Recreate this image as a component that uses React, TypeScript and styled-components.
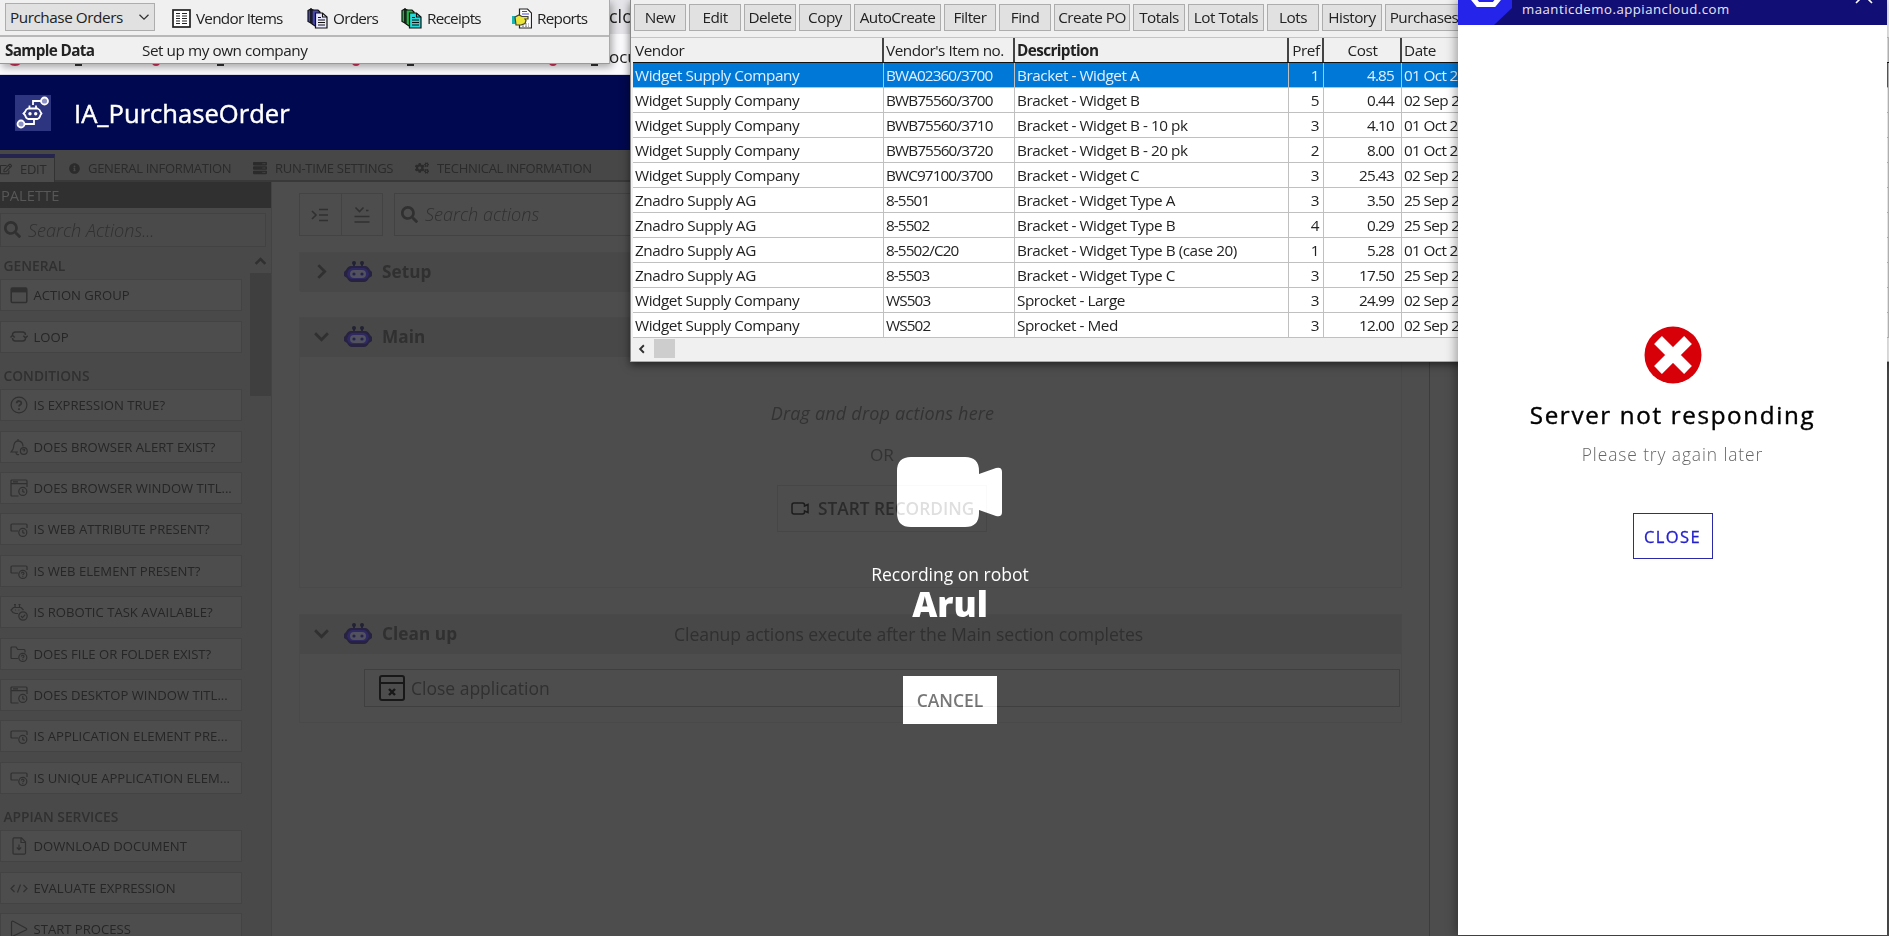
import React from "react";
import styled, { createGlobalStyle } from "styled-components";
import { FaSearch, FaInfoCircle, FaServer, FaCogs, FaRegEdit } from "react-icons/fa";

const Global = createGlobalStyle`
  * { box-sizing: border-box; }
  body { margin: 0; background: #4d4d4d; font-family: "Open Sans", "Noto Sans", sans-serif; }
  button { font-family: inherit; margin: 0; padding: 0; }
  svg { display: block; flex: none; }
`;

const Desktop = styled.div`
  position: relative;
  width: 1889px;
  height: 936px;
  overflow: hidden;
  background: #4d4d4d;
  display: flex;
  flex-direction: column;
`;

/* ---------- browser page ---------- */

const UrlBar = styled.div`
  height: 34px;
  flex: none;
  background: #e6e6ea;
  padding: 2px 0 0 609px;
  font-size: 18px;
  line-height: 28px;
  color: #222;
`;

const Bookmarks = styled.div`
  height: 41px;
  flex: none;
  display: flex;
  background: #fbfbfd;
  border-bottom: 1px solid #dcdce8;
  padding: 8px 0 0 7px;
  font-size: 17px;
  line-height: 30px;
  color: #222;
`;

const Bookmark = styled.div<{ $w: number; $gap: number }>`
  display: flex;
  width: ${(p) => p.$w}px;
  gap: ${(p) => p.$gap}px;
`;

const BookmarkDot = styled.span<{ $size: number }>`
  width: ${(p) => p.$size}px;
  height: ${(p) => p.$size}px;
  margin-top: ${(p) => 24 - p.$size}px;
  border-radius: 50%;
  background: #d8345f;
  flex: none;
`;

const BookmarkTail = styled.span`
  width: 7px;
  height: 2px;
  margin-top: 22px;
  background: #333;
`;

const AppHeader = styled.header`
  height: 75px;
  flex: none;
  background: #00084f;
  display: flex;
  align-items: center;
  padding: 1px 0 0 15px;
  gap: 23px;
  color: #fff;
  font-size: 25.6px;
  -webkit-text-stroke: 0.45px #fff;
`;

const TabStrip = styled.nav`
  height: 32px;
  flex: none;
  display: flex;
  background: #474747;
  border-bottom: 2px solid #393939;
  font-size: 13px;
  letter-spacing: -0.3px;
  color: #2b2b2b;
`;

const Tab = styled.div<{ $w: number; $active?: boolean }>`
  width: ${(p) => p.$w}px;
  height: ${(p) => (p.$active ? 28 : 30)}px;
  margin-top: ${(p) => (p.$active ? 4 : 0)}px;
  padding-top: ${(p) => (p.$active ? 0 : 6)}px;
  padding-bottom: ${(p) => (p.$active ? 2 : 0)}px;
  display: flex;
  align-items: center;
  gap: 8px;
  flex: none;
  white-space: nowrap;
  ${(p) =>
    p.$active &&
    `background:#4b4b4b;border-top:4px solid #24244f;border-right:1px solid #333;margin-right:14px;`}
`;

const Body = styled.div`
  flex: 1;
  display: flex;
  min-height: 0;
`;

const Sidebar = styled.aside`
  width: 272px;
  flex: none;
  display: flex;
  flex-direction: column;
  background: #494949;
  border-right: 1px solid #434343;
  overflow: hidden;
`;

const PaletteTitle = styled.div`
  height: 26px;
  flex: none;
  background: #303030;
  color: #575757;
  font-size: 14.7px;
  line-height: 27px;
  padding-left: 1px;
`;

const SearchBox = styled.div<{ $main?: boolean }>`
  display: flex;
  align-items: center;
  flex: none;
  height: ${(p) => (p.$main ? 43 : 34)}px;
  width: ${(p) => (p.$main ? 400 : 266)}px;
  margin-top: ${(p) => (p.$main ? 0 : 5)}px;
  border: 1px solid #424242;
  background: ${(p) => (p.$main ? "#4d4d4d" : "#4a4a4a")};
  padding: 0 0 1px ${(p) => (p.$main ? 6 : 3)}px;
  gap: 7px;
  font-size: 18.1px;
  font-style: italic;
  font-weight: 300;
  color: #303030;
`;

const PaletteBody = styled.div`
  display: flex;
  flex: 1;
  min-height: 0;
`;

const PaletteList = styled.div`
  width: 250px;
  display: flex;
  flex-direction: column;
  padding-top: 5px;
  overflow: hidden;
`;

const GroupTitle = styled.h3`
  margin: 0;
  height: 27.2px;
  flex: none;
  padding: 4px 0 0 3.5px;
  font-size: 13.8px;
  font-weight: 600;
  line-height: 20px;
  color: #303030;
`;

const PaletteItem = styled.div`
  width: 242px;
  height: 32px;
  margin-bottom: 9.4px;
  flex: none;
  border: 1px solid #434343;
  background: #4d4d4d;
  display: flex;
  align-items: center;
  gap: 5.5px;
  padding: 0 0 0 9px;
  font-size: 13.1px;
  color: #262626;
  white-space: nowrap;
`;

const ScrollTrack = styled.div`
  flex: 1;
  display: flex;
  flex-direction: column;
  align-items: center;
  padding-top: 8px;
  gap: 5px;
`;

const ScrollThumb = styled.div`
  width: 21px;
  height: 123px;
  background: #3f3f3f;
`;

const Workspace = styled.main`
  width: 1158px;
  flex: none;
  border-right: 1px solid #3c3c3c;
  padding: 11px 27px 0 27px;
  display: flex;
  flex-direction: column;
`;

const Tools = styled.div`
  display: flex;
  height: 43px;
  flex: none;
`;

const ToolButton = styled.button<{ $last?: boolean }>`
  width: 42.5px;
  height: 43px;
  border: 1px solid #434343;
  background: transparent;
  display: flex;
  align-items: center;
  justify-content: center;
  margin-right: ${(p) => (p.$last ? 11 : -1)}px;
`;

const Section = styled.section<{ $h: number; $mt: number }>`
  height: ${(p) => p.$h}px;
  margin-top: ${(p) => p.$mt}px;
  border: 1px solid #494949;
  flex: none;
  display: flex;
  flex-direction: column;
`;

const SectionBar = styled.div`
  height: 39px;
  flex: none;
  background: #484848;
  display: flex;
  align-items: center;
  padding-bottom: 2px;
  font-size: 17.6px;
  letter-spacing: -0.07px;
  color: #303030;
`;

const SectionName = styled.span`
  font-size: 17.2px;
  font-weight: 700;
  letter-spacing: 0.05px;
  width: 292px;
  margin-left: 9px;
`;

const ChevronCell = styled.span`
  width: 43px;
  padding-right: 1px;
  display: flex;
  justify-content: center;
`;

const DropZone = styled.div`
  flex: 1;
  padding: 44px 0 0 63px;
  display: flex;
  flex-direction: column;
  align-items: center;
  font-size: 17.2px;
  line-height: 24px;
  color: #333;
`;

const DropHint = styled.em`
  margin-bottom: 18px;
  padding-left: 1px;
  font-size: 18px;
  letter-spacing: 0.18px;
`;

const RecordButton = styled.div`
  width: 210px;
  height: 47px;
  margin-top: 18px;
  border: 1px solid #464646;
  display: flex;
  align-items: center;
  padding-left: 13px;
  gap: 9px;
  font-size: 17.3px;
  font-weight: 600;
  color: #2b2b2b;
  white-space: nowrap;
`;

const ActionRow = styled.div`
  height: 38px;
  margin: 15px 1px 0 64px;
  border: 1px solid #3f3f3f;
  display: flex;
  align-items: center;
  padding-left: 14px;
  gap: 6px;
  font-size: 17.5px;
  color: #303030;
`;

/* ---------- recording overlay ---------- */

const Overlay = styled.div`
  position: absolute;
  left: 850px;
  top: 457px;
  width: 200px;
  display: flex;
  flex-direction: column;
  align-items: center;
  color: #fff;
`;

const CameraMark = styled.svg`
  mix-blend-mode: plus-lighter;
  margin-right: 2px;
`;

const OverlayNote = styled.div`
  margin-top: 35px;
  font-size: 17.5px;
  line-height: 24px;
  white-space: nowrap;
`;

const RobotName = styled.div`
  font-size: 34.6px;
  font-weight: 800;
  line-height: 36px;
`;

const CancelButton = styled.button`
  width: 94px;
  height: 48px;
  margin-top: 54px;
  border: 0;
  background: #b4b4b4;
  color: #2a2a2a;
  font-size: 17.5px;
  font-weight: 600;
  mix-blend-mode: plus-lighter;
`;

/* ---------- desktop windows ---------- */

const MenuWindow = styled.div`
  position: absolute;
  left: 0;
  top: 0;
  width: 610px;
  height: 64px;
  background: #f0f0f0;
  border-right: 1px solid #aaa;
  border-bottom: 1px solid #999;
  box-shadow: 2px 3px 8px rgba(0, 0, 0, 0.35);
  font-size: 15.3px;
  letter-spacing: -0.45px;
  color: #222;
`;

const MenuRow = styled.div`
  display: flex;
  align-items: center;
  height: 37px;
  padding: 0 0 2px 5px;
  border-bottom: 2px solid #b8b8b8;
`;

const Combo = styled.div`
  width: 150px;
  height: 28px;
  border: 1px solid #adadad;
  background: #e1e1e1;
  display: flex;
  align-items: center;
  justify-content: space-between;
  padding: 0 4px;
  margin-right: 17px;
`;

const MenuItem = styled.div<{ $w: number }>`
  width: ${(p) => p.$w}px;
  padding-top: 3px;
  display: flex;
  align-items: center;
  gap: 5px;
  white-space: nowrap;
  letter-spacing: -0.75px;
`;

const CompanyRow = styled.div`
  display: flex;
  height: 26px;
  align-items: center;
  padding-left: 5px;
`;

const SampleData = styled.b`
  width: 137px;
  letter-spacing: -0.65px;
`;

const GridWindow = styled.div`
  position: absolute;
  left: 630px;
  top: 0;
  width: 1259px;
  height: 362px;
  background: #f0f0f0;
  border-left: 1px solid #888;
  border-bottom: 1px solid #aaa;
  box-shadow: 0 3px 8px rgba(0, 0, 0, 0.55);
  font-size: 15.3px;
  letter-spacing: -0.45px;
  color: #222;
  display: flex;
  flex-direction: column;
`;

const CommandBar = styled.div`
  display: flex;
  height: 37.500px;
  flex: none;
  padding: 4px 0 0 3px;
  gap: 3px;
  border-bottom: 1px solid #c4c4c4;
`;

const Command = styled.button<{ $w: number }>`
  width: ${(p) => p.$w}px;
  height: 27px;
  padding-bottom: 2px;
  border: 1px solid #adadad;
  background: #e1e1e1;
  font-size: 15.3px;
  letter-spacing: -0.5px;
  color: #222;
  flex: none;
  white-space: nowrap;
`;

const Row = styled.div<{ $selected?: boolean; $head?: boolean }>`
  display: grid;
  grid-template-columns: 251px 131px 274px 35px 78px 1fr;
  height: 25px;
  flex: none;
  margin-left: 2px;
  background: ${(p) => (p.$head ? "#f0f0f0" : p.$selected ? "#0078d7" : "#fff")};
  color: ${(p) => (p.$selected ? "#dff0ff" : "#222")};
  border-bottom: ${(p) => (p.$head ? "1px solid #111" : "1px solid #c0c0c0")};
`;

const Cell = styled.div<{ $align?: string; $head?: boolean; $bold?: boolean; $spacing?: number }>`
  padding: 0 ${(p) => (p.$align === "cost" ? 7 : p.$align === "center" ? 1 : 4)}px 0 2px;
  line-height: 24px;
  white-space: nowrap;
  overflow: hidden;
  text-align: ${(p) => (p.$align === "center" ? "center" : p.$align ? "right" : "left")};
  font-weight: ${(p) => (p.$bold ? 700 : 400)};
  letter-spacing: ${(p) => p.$spacing ?? -0.45}px;
  border-right: ${(p) => (p.$head ? "2px solid #444" : "1px solid #c0c0c0")};
`;

const HScroll = styled.div`
  display: flex;
  align-items: center;
  gap: 7px;
  height: 22px;
  padding-left: 6px;
`;

const HThumb = styled.div`
  width: 21px;
  height: 19px;
  background: #cdcdcd;
`;

/* ---------- server status panel ---------- */

const Panel = styled.div`
  position: absolute;
  left: 1458px;
  top: 0;
  width: 429px;
  height: 935px;
  background: #fff;
  box-shadow: -2px 0 10px rgba(0, 0, 0, 0.35);
  display: flex;
  flex-direction: column;
  align-items: center;
`;

const PanelHeader = styled.div`
  width: 100%;
  height: 25px;
  background: #110e75;
  display: flex;
  color: #e8e8f4;
  font-size: 13.2px;
  letter-spacing: 0.5px;
  line-height: 19px;
`;

const Host = styled.span`
  margin-left: 10px;
  flex: 1;
`;

const ErrorTitle = styled.div`
  margin-top: 14px;
  font-size: 24.2px;
  line-height: 34px;
  letter-spacing: 1.65px;
  color: #000;
  -webkit-text-stroke: 0.4px #000;
`;

const ErrorNote = styled.div`
  margin-top: 10px;
  font-size: 17.4px;
  font-weight: 300;
  line-height: 24px;
  letter-spacing: 0.9px;
  color: #666;
`;

const CloseButton = styled.button`
  width: 80px;
  height: 46px;
  margin-top: 47px;
  border: 1px solid #2a2aa8;
  background: #fff;
  color: #2420cc;
  font-size: 16.5px;
  letter-spacing: 1.4px;
  -webkit-text-stroke: 0.3px #2420cc;
`;

const ErrorMark = styled.svg`
  margin: 301px 0 0 1px;
`;

/* ---------- icons ---------- */

const ink = "#303030";

type Kind =
  | "group" | "loop" | "question" | "bell" | "winclock" | "attr"
  | "elem" | "robot" | "folder" | "download" | "code" | "play";

const Clock = () => (
  <>
    <circle cx="12.8" cy="12.4" r="4" />
    <path d="M12.8 10v2.6l1.8.8" />
  </>
);
const Quest = () => (
  <>
    <circle cx="12.8" cy="12.4" r="4" />
    <path d="M11.5 11.5c0-1.8 2.7-1.6 2.5 0c-.1.8-1.2.8-1.2 1.7M12.8 14.3v.6" />
  </>
);

const shapes: Record<Kind, React.ReactNode> = {
  group: (<><rect x="1.2" y="2" width="15.6" height="14.4" rx="1.2" strokeWidth="1.5" /><path d="M1 2h16v4.4H1z" fill={ink} stroke="none" /></>),
  loop: (<path strokeWidth="1.4" d="M2.5 8V6.7q0-2.7 3-2.7h7q3 0 3 3M2.5 10q0 3 3 3h7q3 0 3-2.7V8.5M.5 9.5L2.5 7.3l2.2 2.2M13.3 7.8l2.2 2.2l2.2-2.2" />),
  question: (<><circle cx="9" cy="9" r="7.9" /><path strokeWidth="1.8" d="M6.7 7.2c0-3 4.800-2.800 4.600 0c-.1 1.600-2.300 1.600-2.300 3.400M9 12.200v1.700" /></>),
  bell: (<><path d="M13 8.500c0-4-1.500-5.500-5-5.700C4 3 3.700 6.500 3.500 9.500c-.2 2-1.200 2.700-2.500 4.500h7M8 2.800V1M6 14.500c.2 2 1.500 2.300 3 2" /><circle cx="13.800" cy="13" r="3.400" /><path d="M12.800 12.200c0-1.300 2-1.200 1.900 0c-.1.600-.9.600-.9 1.300" /></>),
  winclock: (<><path d="M8.500 17H2q-1 0-1-1V2q0-1 1-1h14q1 0 1 1v6M1 4.600h16M3 2.800h5" /><Clock /></>),
  attr: (<><path d="M8 11H2q-1 0-1-1V5q0-1 1-1h14q1 0 1 1v3" /><Clock /></>),
  elem: (<><path d="M8 11H2q-1 0-1-1V5q0-1 1-1h14q1 0 1 1v3" /><Quest /></>),
  robot: (<><path d="M8 10.500H5.500L3 9.500L1 7l2.500-2.500h7.500L13.500 7M5 4.200V1.500M9.500 4.200V1.500M4 1.500h2M8.500 1.500h2M5 7h.8M8.500 7h.8" /><circle cx="13" cy="13" r="4.200" /><path d="M11 13l1.500 1.600l2.700-3" /></>),
  folder: (<><path d="M8 13.500H2q-1 0-1-1V3q0-1 1-1h4l1.800 2.500H14q1 0 1 1v2" /><Quest /></>),
  download: (<><path d="M4 .8h7.500L15.500 5v11q0 1.200-1.200 1.200H4.200Q3 17.200 3 16V2q0-1.200 1-1.200zM11 1v4.500h4.500M9 7.500v5M6.800 10.500L9 12.700l2.200-2.200" /></>),
  code: (<path d="M4.500 6L1 9.500L4.500 13M13.500 6L17 9.500L13.500 13M10.500 5.500l-3 8" />),
  play: (<path d="M1.500 3v12q0 2 1.700 1L16 10q1.500-.9 0-1.800L3.200 1.200Q1.500.5 1.500 3z" />),
};

const Glyph = ({ kind }: { kind: Kind }) => (
  <svg width="18" height="18" viewBox="0 0 18 18" fill="none" stroke={ink} strokeWidth="1.2">
    {shapes[kind]}
  </svg>
);

const Bot = () => (
  <svg width="30" height="24" viewBox="0 0 30 24">
    <path d="M11 7V3M19 7V3" stroke="#222235" strokeWidth="1.8" />
    <circle cx="11" cy="3" r="2" fill="#222235" />
    <circle cx="19" cy="3" r="2" fill="#222235" />
    <path d="M8 6h14q3 0 5 4l2 2v4l-3 2q-2 4-5 4H9q-3 0-5-4l-3-2v-4l2-2q2-4 5-4z" fill="#26223f" />
    <path d="M9 8h12q4 1 5 6q-1 5-5 5H9q-4 0-5-5q1-5 5-6z" fill="#2f2962" />
    <rect x="7" y="10" width="16" height="8" rx="4" fill="#525160" />
    <circle cx="11" cy="14" r="1.6" fill="#25234a" />
    <circle cx="19" cy="14" r="1.6" fill="#25234a" />
  </svg>
);

const Chevron = ({ dir, size = 15, w = 3 }: { dir: "up" | "down" | "right" | "left"; size?: number; w?: number }) => {
  const d = { up: "M2 11l6-6l6 6", down: "M2 5l6 6l6-6", right: "M5 2l6 6l-6 6", left: "M11 2L5 8l6 6" }[dir];
  return (
    <svg width={size} height={size} viewBox="0 0 16 16" fill="none" stroke="#303030" strokeWidth={w}>
      <path d={d} />
    </svg>
  );
};

const RobotLogo = () => (
  <svg width="36" height="36" viewBox="0 0 36 36" fill="none" stroke="#fff" strokeWidth="1.8">
    <rect width="36" height="36" fill="#2d3580" stroke="none" />
    <circle cx="29.5" cy="6" r="3.5" fill="#8d93c4" />
    <circle cx="6" cy="29" r="3.5" fill="#8d93c4" />
    <path d="M26 6h-8v4M10 29h9v-4M14.5 13.5v-3M21 13.5v-3" />
    <path d="M13 13.5h9.5q2.5 1 3 3.5l1 1.5l-1 1.5q-1 3.5-3 4H13q-2-.5-3-4l-1.500-1.500L10 17q1-3 3-3.500z" />
    <circle cx="15" cy="18.7" r="1.7" fill="#fff" stroke="none" />
    <circle cx="20.7" cy="18.7" r="1.7" fill="#fff" stroke="none" />
  </svg>
);

const ListIcon = () => (
  <svg width="19" height="19" viewBox="0 0 19 19">
    <rect x="1" y="1" width="17" height="17" fill="#fff" stroke="#222" strokeWidth="1.7" />
    <path d="M4 4.500h4M4 7h4M4 9.500h4M4 12h4M4 14.500h4M10 4.500h5M10 7h5M10 9.500h5M10 12h5M10 14.500h5" stroke="#222" strokeWidth="1.2" />
  </svg>
);

const StackIcon = ({ back, front }: { back: string; front: string }) => (
  <svg width="21" height="21" viewBox="0 0 21 21" stroke="#111" strokeWidth="1.2">
    <path d="M1 2.500L4 1v14l-3-1.500z" fill={back} />
    <path d="M4 1l4 2v14l-4-2z" fill={back} />
    <path d="M5 2h6l2 2v14H8l-3-2z" fill={back} />
    <path d="M8.500 5h7l4.500 4v11H8.500z" fill={front} />
    <path d="M15.500 5v4H20M11 9.500h3M11 12h7M11 14.500h7M11 17h7" fill="none" strokeWidth="1.1" />
  </svg>
);

const ReportIcon = () => (
  <svg width="20" height="21" viewBox="0 0 20 21" strokeWidth="1.2">
    <path d="M7.500 1h8l4 4v15h-12z" fill="#fff" stroke="#222" />
    <path d="M10 3.500h5M10 6h7" stroke="#4a4ae0" />
    <path d="M10 16h7M10 18.200h7" stroke="#888" strokeDasharray="2 1" />
    <rect x="0" y="8" width="3.5" height="8" fill="#19b5b5" />
    <path d="M3 9l4-2l3 1.500h6v2.500h-3l1 1.500l-1 3l-4 1.500H4z" fill="#ece53a" stroke="#443" />
  </svg>
);

const CamOutline = () => (
  <svg width="18" height="13" viewBox="0 0 18 13" fill="none" stroke="#1c1c1c" strokeWidth="1.5">
    <path d="M3 1h8.500q2 0 2 2v1L17 2.500v8L13.500 9v1q0 2-2 2H3q-2 0-2-2V3q0-2 2-2z" />
  </svg>
);

const CloseApp = () => (
  <svg width="26" height="26" viewBox="0 0 26 26" fill="none" stroke="#181818" strokeWidth="2">
    <rect x="1" y="1" width="24" height="24" rx="2" />
    <path d="M1 8h24" />
    <path d="M10 14l6 6M16 14l-6 6" strokeWidth="2.4" />
  </svg>
);

/* ---------- data ---------- */

const general: [Kind, string][] = [["group", "ACTION GROUP"], ["loop", "LOOP"]];
const conditions: [Kind, string][] = [
  ["question", "IS EXPRESSION TRUE?"],
  ["bell", "DOES BROWSER ALERT EXIST?"],
  ["winclock", "DOES BROWSER WINDOW TITL..."],
  ["attr", "IS WEB ATTRIBUTE PRESENT?"],
  ["elem", "IS WEB ELEMENT PRESENT?"],
  ["robot", "IS ROBOTIC TASK AVAILABLE?"],
  ["folder", "DOES FILE OR FOLDER EXIST?"],
  ["winclock", "DOES DESKTOP WINDOW TITL..."],
  ["attr", "IS APPLICATION ELEMENT PRE..."],
  ["elem", "IS UNIQUE APPLICATION ELEM..."],
];
const services: [Kind, string][] = [
  ["download", "DOWNLOAD DOCUMENT"],
  ["code", "EVALUATE EXPRESSION"],
  ["play", "START PROCESS"],
];

const commands: [string, number][] = [
  ["New", 52], ["Edit", 52], ["Delete", 52], ["Copy", 52], ["AutoCreate", 87], ["Filter", 52],
  ["Find", 52], ["Create PO", 76], ["Totals", 52], ["Lot Totals", 76], ["Lots", 52], ["History", 60],
  ["Purchases", 78],
];

const W = "Widget Supply Company";
const Z = "Znadro Supply AG";
const rows = [
  [W, "BWA02360/3700", "Bracket - Widget A", "1", "4.85", "01 Oct 2"],
  [W, "BWB75560/3700", "Bracket - Widget B", "5", "0.44", "02 Sep 2"],
  [W, "BWB75560/3710", "Bracket - Widget B - 10 pk", "3", "4.10", "01 Oct 2"],
  [W, "BWB75560/3720", "Bracket - Widget B - 20 pk", "2", "8.00", "01 Oct 2"],
  [W, "BWC97100/3700", "Bracket - Widget C", "3", "25.43", "02 Sep 2"],
  [Z, "8-5501", "Bracket - Widget Type A", "3", "3.50", "25 Sep 2"],
  [Z, "8-5502", "Bracket - Widget Type B", "4", "0.29", "25 Sep 2"],
  [Z, "8-5502/C20", "Bracket - Widget Type B (case 20)", "1", "5.28", "01 Oct 2"],
  [Z, "8-5503", "Bracket - Widget Type C", "3", "17.50", "25 Sep 2"],
  [W, "WS503", "Sprocket - Large", "3", "24.99", "02 Sep 2"],
  [W, "WS502", "Sprocket - Med", "3", "12.00", "02 Sep 2"],
];

const Group = ({ title, items }: { title: string; items: [Kind, string][] }) => (
  <>
    <GroupTitle>{title}</GroupTitle>
    {items.map(([kind, label]) => (
      <PaletteItem key={label}>
        <Glyph kind={kind} />
        {label}
      </PaletteItem>
    ))}
  </>
);

const BarContent = ({ name, open, note }: { name: string; open: boolean; note?: string }) => (
  <SectionBar>
    <ChevronCell><Chevron dir={open ? "down" : "right"} size={17} w={2.6} /></ChevronCell>
    <Bot />
    <SectionName>{name}</SectionName>
    {note}
  </SectionBar>
);

export default function App() {
  return (
    <>
      <Global />
      <Desktop>
        <UrlBar>clo</UrlBar>
        <Bookmarks>
          <Bookmark $w={145} $gap={52}><BookmarkDot $size={16} /><BookmarkTail /></Bookmark>
          <Bookmark $w={200} $gap={57}><BookmarkDot $size={8} /><BookmarkTail /></Bookmark>
          <Bookmark $w={197} $gap={47}><BookmarkDot $size={8} /><BookmarkTail /></Bookmark>
          <Bookmark $w={60} $gap={34}><BookmarkDot $size={8} /><BookmarkTail /></Bookmark>
          <span>ocu</span>
        </Bookmarks>
        <AppHeader><RobotLogo />IA_PurchaseOrder</AppHeader>
        <TabStrip>
          <Tab $w={55} $active><FaRegEdit size={12} />EDIT</Tab>
          <Tab $w={184}><FaInfoCircle size={11} />GENERAL INFORMATION</Tab>
          <Tab $w={162}><FaServer size={14} />RUN-TIME SETTINGS</Tab>
          <Tab $w={200}><FaCogs size={14} />TECHNICAL INFORMATION</Tab>
        </TabStrip>
        <Body>
          <Sidebar>
            <PaletteTitle>PALETTE</PaletteTitle>
            <SearchBox><FaSearch size={17} color="#303030" />Search Actions...</SearchBox>
            <PaletteBody>
              <PaletteList>
                <Group title="GENERAL" items={general} />
                <Group title="CONDITIONS" items={conditions} />
                <Group title="APPIAN SERVICES" items={services} />
              </PaletteList>
              <ScrollTrack>
                <Chevron dir="up" size={13} />
                <ScrollThumb />
              </ScrollTrack>
            </PaletteBody>
          </Sidebar>
          <Workspace>
            <Tools>
              <ToolButton>
                <svg width="18" height="16" viewBox="0 0 18 16" fill="none" stroke={ink} strokeWidth="1.6">
                  <path d="M1 4l4 4l-4 4M8 2.500h9M8 8h9M8 13.500h9" />
                </svg>
              </ToolButton>
              <ToolButton $last>
                <svg width="18" height="18" viewBox="0 0 18 18" fill="none" stroke={ink} strokeWidth="1.6">
                  <path d="M2.500 1.500l4 4l4-4M13 4.500h2.500M1.500 10.500h15M1.500 16h15" />
                </svg>
              </ToolButton>
              <SearchBox $main><FaSearch size={17} color="#303030" />Search actions</SearchBox>
            </Tools>
            <Section $h={39} $mt={16}><BarContent name="Setup" open={false} /></Section>
            <Section $h={271} $mt={26}>
              <BarContent name="Main" open />
              <DropZone>
                <DropHint>Drag and drop actions here</DropHint>
                <span>OR</span>
                <RecordButton><CamOutline />START RECORDING</RecordButton>
              </DropZone>
            </Section>
            <Section $h={109} $mt={26}>
              <BarContent name="Clean up" open note="Cleanup actions execute after the Main section completes" />
              <ActionRow><CloseApp />Close application</ActionRow>
            </Section>
          </Workspace>
        </Body>

        <Overlay>
          <CameraMark width="105" height="70" viewBox="0 0 105 70" fill="#b4b4b4">
            <path d="M14 0h54q14 0 14 14v3l17-6q6-1.500 6 4v40q0 5.500-6 4l-17-6v3q0 14-14 14H14Q0 70 0 56V14Q0 0 14 0z" />
          </CameraMark>
          <OverlayNote>Recording on robot</OverlayNote>
          <RobotName>Arul</RobotName>
          <CancelButton>CANCEL</CancelButton>
        </Overlay>

        <MenuWindow>
          <MenuRow>
            <Combo>Purchase Orders<Chevron dir="down" size={12} w={1.6} /></Combo>
            <MenuItem $w={135}><ListIcon />Vendor Items</MenuItem>
            <MenuItem $w={94}><StackIcon back="#4747b5" front="#e9e9ff" />Orders</MenuItem>
            <MenuItem $w={111}><StackIcon back="#25b548" front="#26d8d8" />Receipts</MenuItem>
            <MenuItem $w={90}><ReportIcon />Reports</MenuItem>
          </MenuRow>
          <CompanyRow><SampleData>Sample Data</SampleData>Set up my own company</CompanyRow>
        </MenuWindow>

        <GridWindow>
          <CommandBar>
            {commands.map(([label, w]) => <Command key={label} $w={w}>{label}</Command>)}
          </CommandBar>
          <Row $head>
            <Cell $head>Vendor</Cell>
            <Cell $head>Vendor's Item no.</Cell>
            <Cell $head $bold $spacing={-0.6}>Description</Cell>
            <Cell $head $align="center">Pref</Cell>
            <Cell $head $align="center">Cost</Cell>
            <Cell>Date</Cell>
          </Row>
          {rows.map((r, i) => (
            <Row key={i} $selected={i === 0}>
              <Cell>{r[0]}</Cell>
              <Cell $spacing={-0.9}>{r[1]}</Cell>
              <Cell>{r[2]}</Cell>
              <Cell $align="right">{r[3]}</Cell>
              <Cell $align="cost" $spacing={-0.8}>{r[4]}</Cell>
              <Cell $spacing={-0.65}>{r[5]}</Cell>
            </Row>
          ))}
          <HScroll><Chevron dir="left" size={10} w={3} /><HThumb /></HScroll>
        </GridWindow>

        <Panel>
          <PanelHeader>
            <svg width="54" height="25" viewBox="0 0 54 25">
              <path d="M0 0h54v8L36 25H0z" fill="#2424ea" />
              <path d="M13 -4l7 8.500h16l7-8.500" fill="none" stroke="#fff" strokeWidth="5" />
            </svg>
            <Host>maanticdemo.appiancloud.com</Host>
            <svg width="32" height="25" viewBox="0 0 32 25" stroke="#fff" strokeWidth="1.6">
              <path d="M1 3L9 -5M17 3L9 -5" />
            </svg>
          </PanelHeader>
          <ErrorMark width="58" height="58" viewBox="0 0 58 58">
            <circle cx="29" cy="29" r="28.5" fill="#d80008" />
            <path d="M14 14l30 30M44 14L14 44" stroke="#fff" strokeWidth="11" />
          </ErrorMark>
          <ErrorTitle>Server not responding</ErrorTitle>
          <ErrorNote>Please try again later</ErrorNote>
          <CloseButton>CLOSE</CloseButton>
        </Panel>
      </Desktop>
    </>
  );
}
